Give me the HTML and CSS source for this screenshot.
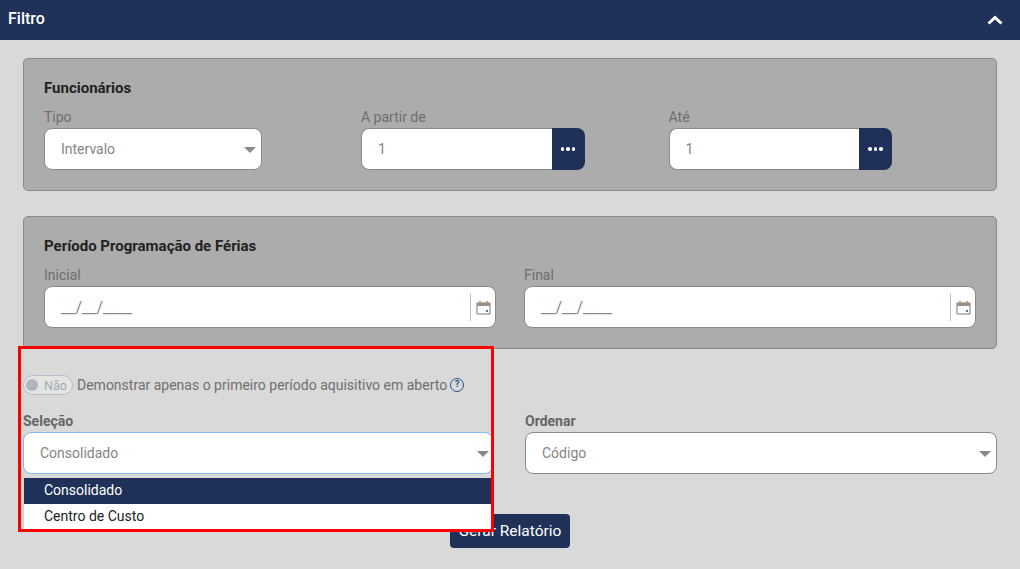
FILE: index.html
```html
<!DOCTYPE html>
<html lang="pt-BR">

<head>
    <meta charset="utf-8">
    <title>Filtro</title>
    <link rel="stylesheet" href="styles.css">
</head>

<body>
    <header class="topo">
        <span>Filtro</span>
        <svg class="seta" width="16" height="10" viewBox="0 0 16 10">
            <path d="M1.5 8.5 8 2.5l6.5 6" fill="none" stroke="#fff" stroke-width="3"/>
        </svg>
    </header>

    <main class="conteudo">
        <section class="painel">
            <h2>Funcionários</h2>
            <div class="linha-func">
                <div class="campo">
                    <label>Tipo</label>
                    <div class="select tipo">Intervalo<i class="caret"></i></div>
                </div>
                <div class="campo">
                    <label>A partir de</label>
                    <div class="busca">
                        <div class="input">1</div>
                        <button class="pontos"><b></b><b></b><b></b></button>
                    </div>
                </div>
                <div class="campo">
                    <label>Até</label>
                    <div class="busca">
                        <div class="input">1</div>
                        <button class="pontos"><b></b><b></b><b></b></button>
                    </div>
                </div>
            </div>
        </section>

        <section class="painel">
            <h2>Período Programação de Férias</h2>
            <div class="linha-datas">
                <div class="campo">
                    <label>Inicial</label>
                    <div class="input data">
                        <span class="mascara">__/__/____</span>
                        <span class="cal">
                            <svg width="15" height="15" viewBox="0 0 15 15">
                                <path d="M1 3h13v11H1z" fill="#fff" stroke="#7d7468"/>
                                <path d="M1 3h13v3H1z" fill="#9a8f82"/>
                                <path d="M4 1v3M11 1v3" stroke="#b98a62" stroke-width="1.5"/>
                                <path d="M10 10h2v2h-2z" fill="#5d6f8f"/>
                            </svg>
                        </span>
                    </div>
                </div>
                <div class="campo">
                    <label>Final</label>
                    <div class="input data">
                        <span class="mascara">__/__/____</span>
                        <span class="cal">
                            <svg width="15" height="15" viewBox="0 0 15 15">
                                <path d="M1 3h13v11H1z" fill="#fff" stroke="#7d7468"/>
                                <path d="M1 3h13v3H1z" fill="#9a8f82"/>
                                <path d="M4 1v3M11 1v3" stroke="#b98a62" stroke-width="1.5"/>
                                <path d="M10 10h2v2h-2z" fill="#5d6f8f"/>
                            </svg>
                        </span>
                    </div>
                </div>
            </div>
        </section>

        <div class="opcao">
            <span class="toggle"><i></i>Não</span>
            <span>Demonstrar apenas o primeiro período aquisitivo em aberto</span>
            <span class="ajuda">?</span>
        </div>

        <div class="linha-selecao">
            <div class="campo">
                <label class="forte">Seleção</label>
                <div class="select ativo">Consolidado<i class="caret"></i></div>
                <ul class="lista">
                    <li class="valgt">Consolidado</li>
                    <li>Centro de Custo</li>
                </ul>
            </div>
            <div class="campo">
                <label class="forte">Ordenar</label>
                <div class="select">Código<i class="caret"></i></div>
            </div>
        </div>

        <div class="acoes">
            <button class="gerar">Gerar Relatório</button>
        </div>
    </main>

    <div class="destaque"></div>
</body>

</html>
```

FILE: styles.css
```css
* {
    margin: 0;
    padding: 0;
    box-sizing: border-box;
}

html,
body {
    height: 569px;
    overflow: hidden;
}

body {
    position: relative;
    background-color: #d9d9d9;
    font-family: 'Roboto', sans-serif;
    font-size: 14px;
    color: #6f6f6f;
}

.topo {
    display: flex;
    justify-content: space-between;
    align-items: center;
    height: 40px;
    padding: 0 17px 4px 8px;
    background-color: #1f3158;
    color: #fff;
    font-size: 16px;
    font-weight: 500;
}

.seta {
    margin-top: 4px;
}

.conteudo {
    padding: 18px 23px 0;
}

.painel {
    height: 133px;
    margin-bottom: 25px;
    padding: 19px 20px 0;
    background-color: #acacac;
    border: 1px solid #888;
    border-radius: 5px;
}

.painel h2 {
    height: 20px;
    font-size: 15px;
    font-weight: 700;
    line-height: 20px;
    color: #222;
}

.linha-func {
    display: grid;
    grid-template-columns: 317px 307.6px 1fr;
    margin-top: 10px;
}

.linha-datas {
    display: grid;
    grid-template-columns: 452px 452px;
    gap: 28px;
    margin-top: 10px;
}

.campo {
    position: relative;
}

.campo label {
    display: block;
    height: 20px;
    line-height: 18px;
    color: #707070;
}

.campo label.forte {
    font-weight: 700;
    color: #666;
}

.painel .campo label {
    color: #6e6e6e;
}

.select,
.input {
    display: flex;
    align-items: center;
    height: 42px;
    padding-left: 16px;
    background-color: #fff;
    border: 1px solid #8a8a8a;
    border-radius: 8px;
    color: #858585;
}

.select {
    position: relative;
}

.tipo {
    width: 218px;
}

.caret {
    position: absolute;
    right: 5px;
    top: 18px;
    border-left: 6px solid transparent;
    border-right: 6px solid transparent;
    border-top: 6px solid #8a8a8a;
}

.ativo .caret {
    right: 3px;
}

.busca {
    display: flex;
    width: 223.5px;
}

.busca .input {
    flex: 1;
    border-right: none;
    border-radius: 8px 0 0 8px;
}

.pontos {
    display: flex;
    justify-content: center;
    align-items: center;
    gap: 2px;
    width: 33px;
    height: 42px;
    background-color: #1f3158;
    border: none;
    border-radius: 0 8px 8px 0;
}

.pontos b {
    width: 3.5px;
    height: 3.5px;
    background-color: #fff;
    border-radius: 50%;
}

.data {
    justify-content: space-between;
    height: 42px;
    padding-right: 4px;
}

.mascara {
    font-size: 16px;
}

.cal {
    display: flex;
    align-items: center;
    height: 28px;
    padding-left: 5px;
    border-left: 1px solid #c4c4c4;
}

.opcao {
    display: flex;
    align-items: center;
    height: 20px;
    margin-top: 26px;
}

.toggle {
    position: relative;
    width: 50px;
    height: 20px;
    margin-right: 4px;
    padding-left: 20px;
    background-color: #e4e4e4;
    border: 1px solid #b9bec6;
    border-radius: 10px;
    font-size: 12.5px;
    line-height: 19px;
    color: #a3a9b3;
}

.toggle i {
    position: absolute;
    left: 2px;
    top: 3px;
    width: 12px;
    height: 12px;
    background-color: #adb5bd;
    border-radius: 50%;
}

.ajuda {
    width: 14px;
    height: 14px;
    margin-left: 3px;
    border: 1.5px solid #2b4f85;
    border-radius: 50%;
    font-size: 9px;
    font-weight: 700;
    line-height: 11px;
    text-align: center;
    color: #2b4f85;
}

.linha-selecao {
    display: grid;
    grid-template-columns: 470px 472px;
    gap: 32px;
    margin-top: 17px;
}

.ativo {
    border-color: #85b8f0;
}

.lista {
    position: absolute;
    left: 1px;
    right: 1px;
    top: 66px;
    z-index: 2;
    background-color: #fff;
    list-style: none;
}

.lista li {
    height: 26px;
    padding-left: 20px;
    line-height: 25px;
    color: #222;
}

.lista .valgt {
    background-color: #1f3158;
    color: #fff;
}

.acoes {
    display: flex;
    justify-content: center;
    margin-top: 40px;
}

.gerar {
    width: 120px;
    height: 34px;
    background-color: #1f3158;
    border: none;
    border-radius: 4px;
    font-family: 'Roboto', sans-serif;
    font-size: 15.5px;
    color: #fff;
}

.destaque {
    position: absolute;
    left: 18px;
    top: 346px;
    z-index: 3;
    width: 476px;
    height: 186px;
    border: 3px solid #f00;
}
```
